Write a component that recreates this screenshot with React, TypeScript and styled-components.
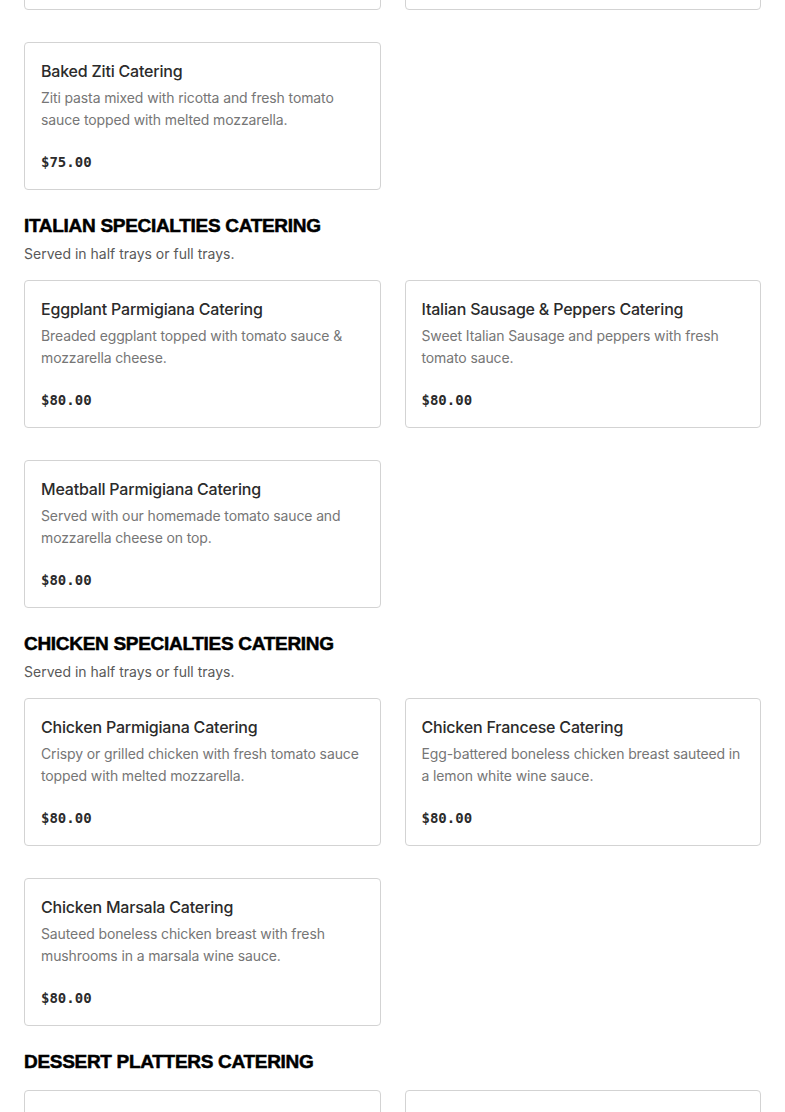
import React from "react";
import styled, { createGlobalStyle } from "styled-components";

const GlobalStyle = createGlobalStyle`
  html, body { margin: 0; padding: 0; background: #ffffff; }
  body { font-family: Inter, "Noto Sans", sans-serif; color: #2b2b2b; overflow: hidden; }
  * { box-sizing: border-box; }
`;

type Item = { name: string; desc: string; price: string };
type Section = { title: string; subtitle?: string; items: Item[] };

const sections: Section[] = [
  {
    title: "PASTA CATERING",
    subtitle: "Served in half trays or full trays.",
    items: [
      { name: "Penne Vodka Catering", desc: "Penne pasta in a creamy pink vodka sauce with fresh basil.", price: "$75.00" },
      { name: "Baked Lasagna Catering", desc: "Layers of pasta, ricotta, meat sauce and melted mozzarella.", price: "$75.00" },
      { name: "Baked Ziti Catering", desc: "Ziti pasta mixed with ricotta and fresh tomato sauce topped with melted mozzarella.", price: "$75.00" },
    ],
  },
  {
    title: "ITALIAN SPECIALTIES CATERING",
    subtitle: "Served in half trays or full trays.",
    items: [
      { name: "Eggplant Parmigiana Catering", desc: "Breaded eggplant topped with tomato sauce & mozzarella cheese.", price: "$80.00" },
      { name: "Italian Sausage & Peppers Catering", desc: "Sweet Italian Sausage and peppers with fresh tomato sauce.", price: "$80.00" },
      { name: "Meatball Parmigiana Catering", desc: "Served with our homemade tomato sauce and mozzarella cheese on top.", price: "$80.00" },
    ],
  },
  {
    title: "CHICKEN SPECIALTIES CATERING",
    subtitle: "Served in half trays or full trays.",
    items: [
      { name: "Chicken Parmigiana Catering", desc: "Crispy or grilled chicken with fresh tomato sauce topped with melted mozzarella.", price: "$80.00" },
      { name: "Chicken Francese Catering", desc: "Egg-battered boneless chicken breast sauteed in a lemon white wine sauce.", price: "$80.00" },
      { name: "Chicken Marsala Catering", desc: "Sauteed boneless chicken breast with fresh mushrooms in a marsala wine sauce.", price: "$80.00" },
    ],
  },
  {
    title: "DESSERT PLATTERS CATERING",
    items: [
      { name: "Cannoli Platter Catering", desc: "Crispy shells filled with sweet ricotta cream and chocolate chips.", price: "$60.00" },
      { name: "Cookie Platter Catering", desc: "An assortment of freshly baked Italian cookies.", price: "$45.00" },
    ],
  },
];

const Page = styled.main`
  padding: 0 24px;
  margin-top: -204px;
`;

const SectionBlock = styled.section`
  margin-top: 24px;
  &:first-child { margin-top: 0; }
`;

const SectionHeader = styled.header`
  display: flex;
  flex-direction: column;
  gap: 6px;
  margin-bottom: 16px;
`;

const SectionTitle = styled.h2`
  margin: 0;
  font-family: "Liberation Sans", Arial, sans-serif;
  font-weight: 700;
  font-size: 19px;
  line-height: 24px;
  color: #000;
  -webkit-text-stroke: 0.5px #000;
  letter-spacing: -0.3px;
`;

const SectionSubtitle = styled.p`
  margin: 0;
  font-size: 14px;
  line-height: 20px;
  color: #595959;
`;

const Grid = styled.div`
  display: grid;
  grid-template-columns: repeat(2, minmax(0, 1fr));
  column-gap: 24px;
  row-gap: 32px;
`;

const Card = styled.article`
  border: 1px solid #d3d3d3;
  border-radius: 4px;
  padding: 16px;
  height: 148px;
  display: flex;
  flex-direction: column;
`;

const ItemName = styled.h3`
  margin: 0;
  font-size: 16px;
  line-height: 24px;
  font-weight: 500;
  letter-spacing: -0.2px;
  color: #2b2b2b;
`;

const ItemDesc = styled.p`
  margin: 4px 0 0;
  font-size: 14px;
  line-height: 22px;
  letter-spacing: -0.12px;
  color: #767676;
`;

const Price = styled.div`
  margin-top: 21px;
  font-family: "DejaVu Sans Mono", "Liberation Mono", monospace;
  font-weight: 700;
  font-size: 14px;
  line-height: 20px;
  color: #2b2b2b;
`;

export default function App() {
  return (
    <>
      <GlobalStyle />
      <Page>
        {sections.map((s) => (
          <SectionBlock key={s.title}>
            <SectionHeader>
              <SectionTitle>{s.title}</SectionTitle>
              {s.subtitle && <SectionSubtitle>{s.subtitle}</SectionSubtitle>}
            </SectionHeader>
            <Grid>
              {s.items.map((it) => (
                <Card key={it.name}>
                  <ItemName>{it.name}</ItemName>
                  <ItemDesc>{it.desc}</ItemDesc>
                  <Price>{it.price}</Price>
                </Card>
              ))}
            </Grid>
          </SectionBlock>
        ))}
      </Page>
    </>
  );
}
